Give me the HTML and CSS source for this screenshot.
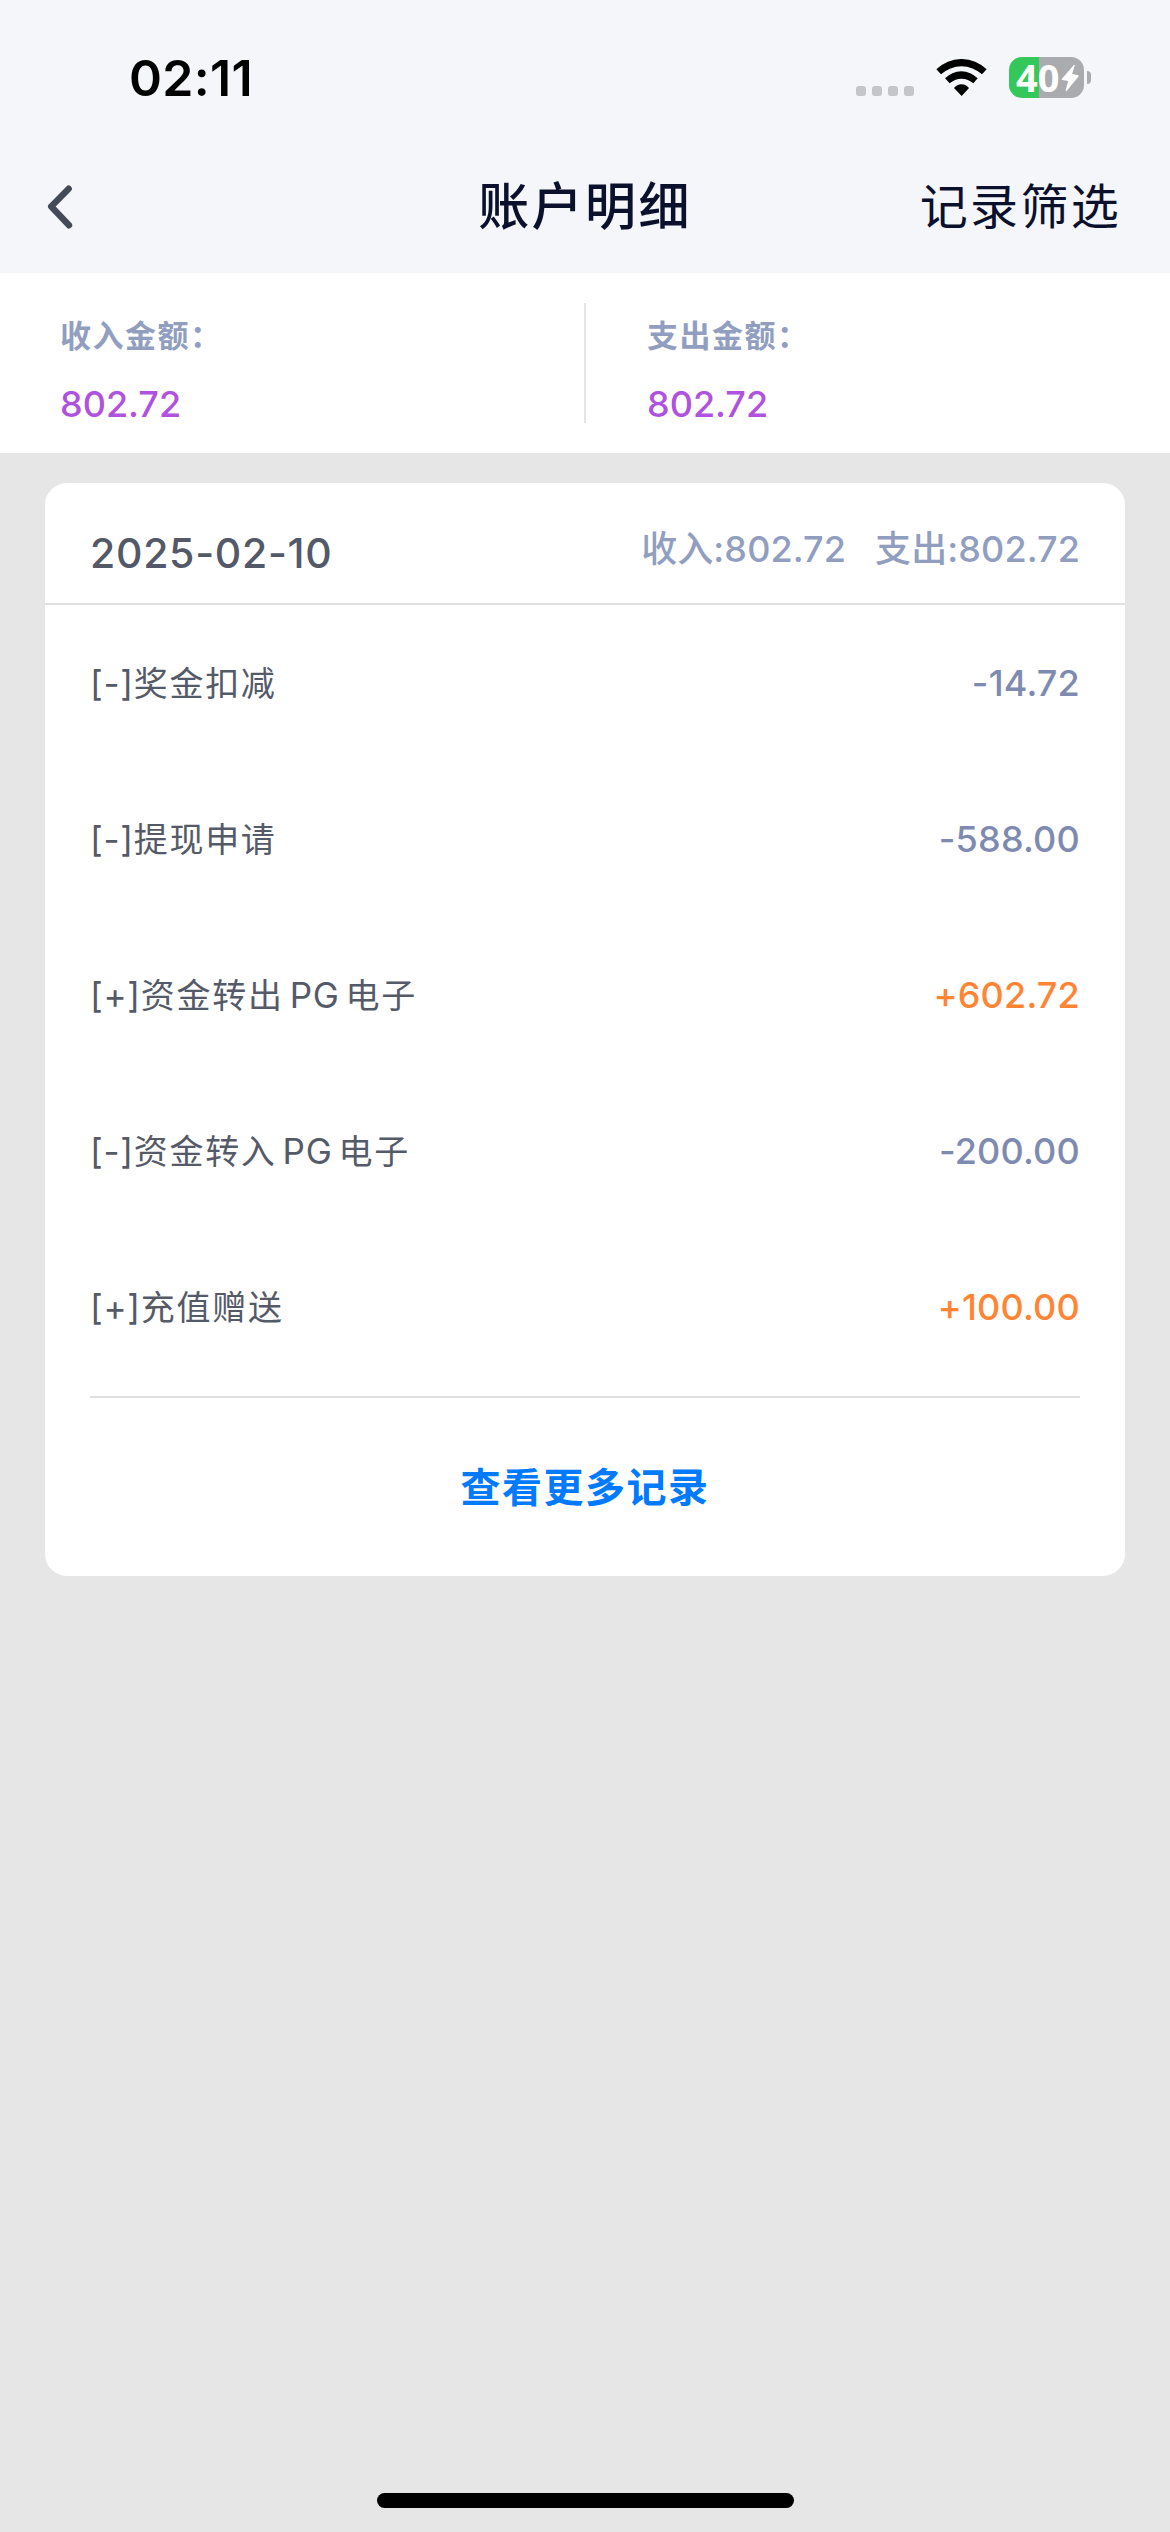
FILE: index.html
```html
<!DOCTYPE html>
<html lang="zh-CN">
<head>
<meta charset="utf-8">
<title>账户明细</title>
<link rel="stylesheet" href="styles.css">
</head>
<body>
<header class="top">
  <div class="status">
    <span class="time">02:11</span>
    <div class="status-icons">
      <div class="dots"><i></i><i></i><i></i><i></i></div>
      <svg class="wifi" viewBox="319 87 151 111"><path d="M319 118A107.4 107.4 0 0 1 470 118L456 133A90.8 90.8 0 0 0 333 133ZM345 145A67.7 67.7 0 0 1 443 145L430 160A52 52 0 0 0 359 160ZM372 174A28.5 28.5 0 0 1 417 174L395 198Z"/></svg>
      <div class="battery">
        <div class="cell"><span class="level">40</span><svg class="bolt" viewBox="694 104 55 84"><path d="M733 106Q736 104 736 108L728 134L745 137Q749 138 747 142L712 185Q708 188 708 184L716 155L698 152Q694 151 697 148Z"/></svg></div>
        <i class="nub"></i>
      </div>
    </div>
  </div>
  <nav class="nav">
    <svg class="back" viewBox="0 0 28 48"><path d="M23.7 5.7L6.2 23.5L24 42.3"/></svg>
    <h1 class="title">账户明细</h1>
    <a class="filter">记录筛选</a>
  </nav>
</header>
<section class="summary">
  <div class="sum"><span class="label">收入金额：</span><span class="value">802.72</span></div>
  <div class="sum"><span class="label">支出金额：</span><span class="value">802.72</span></div>
</section>
<main class="card">
  <div class="card-head">
    <span class="date">2025-02-10</span>
    <div class="totals"><span>收入:802.72</span><span>支出:802.72</span></div>
  </div>
  <ul class="rows">
    <li><span class="name"><span class="latin">[-]</span>奖金扣减</span><span class="amount">-14.72</span></li>
    <li><span class="name"><span class="latin">[-]</span>提现申请</span><span class="amount">-588.00</span></li>
    <li><span class="name"><span class="latin">[+]</span>资金转出<span class="latin"> PG </span>电子</span><span class="amount plus">+602.72</span></li>
    <li><span class="name"><span class="latin">[-]</span>资金转入<span class="latin"> PG </span>电子</span><span class="amount">-200.00</span></li>
    <li><span class="name"><span class="latin">[+]</span>充值赠送</span><span class="amount plus">+100.00</span></li>
  </ul>
  <a class="more">查看更多记录</a>
</main>
<div class="home"></div>
</body>
</html>
```
FILE: styles.css
```css
* { box-sizing: border-box; }
body {
  margin: 0;
  width: 1170px;
  height: 2532px;
  display: flex;
  flex-direction: column;
  background: #e6e6e6;
  font-family: Inter, "Noto Sans CJK SC", sans-serif;
  white-space: nowrap;
  overflow: hidden;
}
.top { height: 273px; background: #f5f6fa; flex: none; }
.status {
  height: 141px;
  padding: 14px 79px 0 129px;
  display: flex;
  align-items: center;
  justify-content: space-between;
}
.time { font-size: 50px; font-weight: 600; line-height: 60px; letter-spacing: 0.3px; color: #000; }
.status-icons { display: flex; align-items: center; }
.dots { display: flex; gap: 6px; margin: 27px 22px 0 0; }
.dots i { width: 10px; height: 10px; border-radius: 3px; background: #c4c5c9; }
.wifi { width: 51px; height: 37px; margin-right: 22px; }
.battery { display: flex; align-items: center; gap: 3px; }
.cell {
  width: 75px;
  height: 41px;
  border-radius: 13px;
  background: linear-gradient(90deg, #34c759 30px, #aaabaf 30px);
  display: flex;
  align-items: center;
  padding-left: 7px;
}
.level { font: 700 38px/41px "Noto Sans", sans-serif; color: #fff; width: 45px; }
.bolt { width: 18px; height: 28px; fill: #fff; }
.nub { width: 4px; height: 13px; border-radius: 0 4px 4px 0; background: #aaabaf; }
.nav {
  height: 132px;
  padding: 0 45px;
  display: grid;
  grid-template-columns: 1fr auto 1fr;
  align-items: center;
}
.back { width: 28px; height: 48px; fill: none; stroke: #444a57; stroke-width: 6.4; stroke-linecap: round; stroke-linejoin: round; }
.title { margin: 0; font-size: 51px; font-weight: 500; line-height: 60px; letter-spacing: 2.4px; color: #0b102c; }
.filter { justify-self: end; margin-right: 4px; font-size: 48px; line-height: 60px; letter-spacing: 2.3px; color: #0b102c; }
.summary { height: 180px; flex: none; background: #fff; display: flex; padding: 30px 0; }
.sum { width: 584px; flex: none; height: 120px; padding: 12px 0 0 61px; display: flex; flex-direction: column; gap: 25px; }
.sum:first-child { width: 586px; padding-left: 60px; border-right: 2px solid #e5e5e5; }
.label { font-size: 31px; font-weight: 700; line-height: 42px; letter-spacing: 1.5px; color: #919ebf; }
.value { font-size: 36px; font-weight: 500; line-height: 44px; color: #af52de; }
.card { margin: 30px 45px 0; height: 1093px; flex: none; background: #fff; border-radius: 22px; }
.card-head {
  height: 122px;
  padding: 0 45px;
  border-bottom: 2px solid #e0e0e0;
  display: flex;
  justify-content: space-between;
}
.date { font-size: 41px; font-weight: 500; line-height: 50px; margin-top: 45px; letter-spacing: 0.7px; color: #535968; }
.totals { display: flex; gap: 29px; font-size: 36px; font-weight: 500; line-height: 50px; padding-top: 41px; letter-spacing: 0.1px; color: #919ebf; }
.rows { list-style: none; margin: 0 45px; padding: 0; height: 793px; border-bottom: 2px solid #e0e0e0; }
.rows li { height: 156px; display: flex; align-items: center; justify-content: space-between; }
.name { font-size: 34px; font-weight: 400; line-height: 50px; letter-spacing: 1.7px; padding-top: 1px; color: #555a69; }
.latin { font-size: 35px; letter-spacing: 0.7px; word-spacing: -4.5px; }
.amount { font-size: 36px; font-weight: 500; line-height: 50px; letter-spacing: 0.2px; color: #7f8ab0; }
.plus { color: #ff8534; }
.more { height: 174px; display: flex; align-items: center; justify-content: center; font-size: 40px; font-weight: 700; letter-spacing: 1.5px; color: #007aff; }
.home { width: 417px; height: 15px; border-radius: 8px; background: #000; margin: auto auto 24px 377px; }
```
